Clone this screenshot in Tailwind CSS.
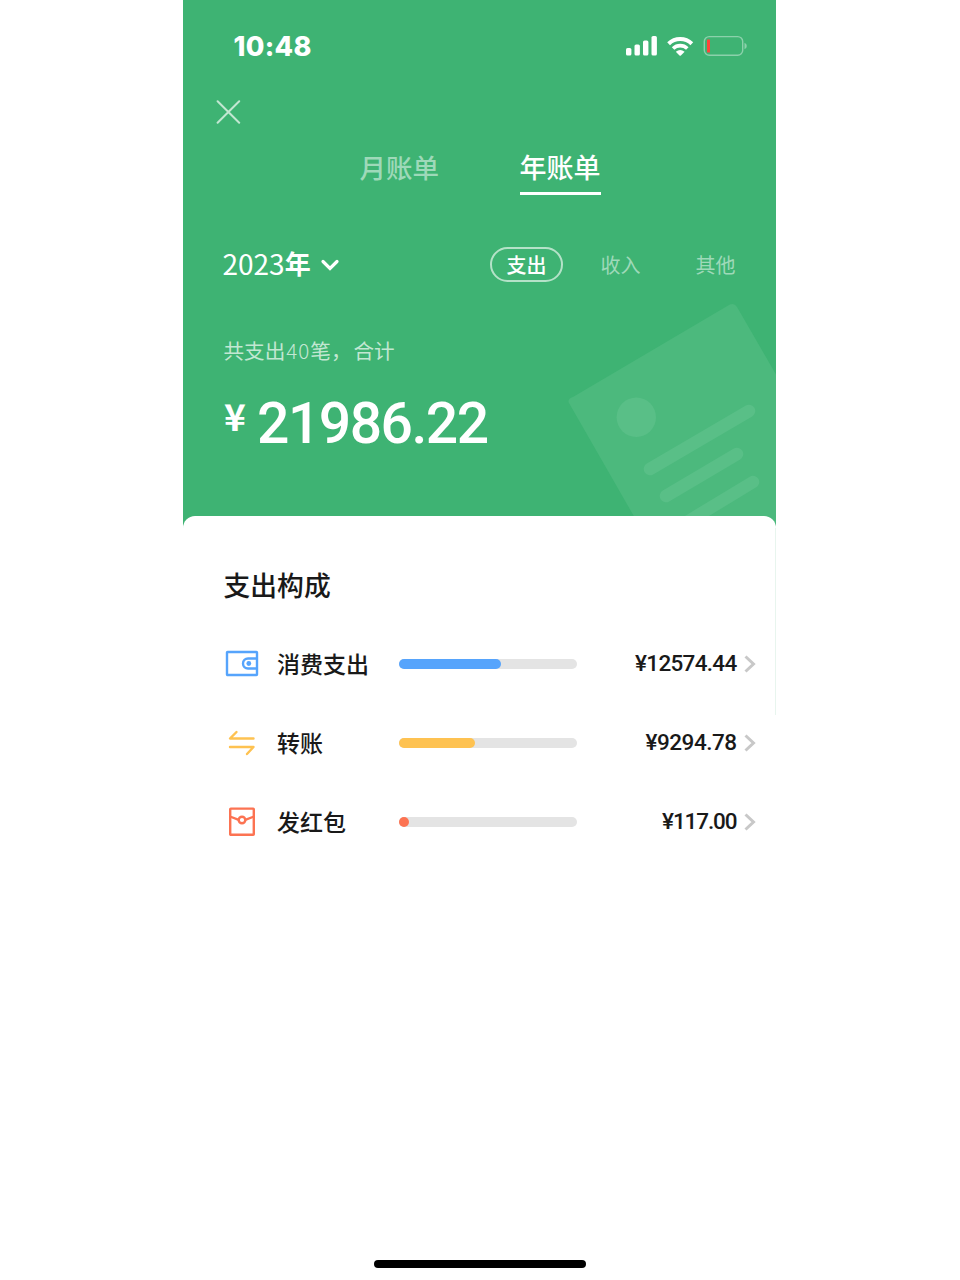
<!DOCTYPE html>
<html lang="zh-CN">
<head>
    <meta charset="UTF-8">
    <meta name="viewport" content="width=device-width, initial-scale=1.0">
    <title>年账单</title>
    <script src="https://cdn.jsdelivr.net/npm/@tailwindcss/browser@4"></script>
</head>
<body class="bg-white font-['Noto_Sans_CJK_SC',sans-serif]">
    <div class="relative ml-[183px] flex h-[1280px] w-[593px] flex-col overflow-hidden bg-white">
        <header class="relative h-[528px] shrink-0 overflow-hidden bg-[#3eb373] text-white">
            <svg class="absolute top-[290px] left-[367px]" width="226" height="238" viewBox="550 290 226 238" fill="none">
                <path d="M573 397 729 305Q734 302 737 307L800 416V614H690L569 403Q567 399 573 397Z" fill="#4cb97d"/>
                <circle cx="636.3" cy="417.3" r="19.7" fill="#59bf87"/>
                <path d="M650 469 749 411M666 496 737 454M682 525 753 482" stroke="#59bf87" stroke-width="12.5" stroke-linecap="round"/>
            </svg>

            <div class="flex h-[92px] items-center justify-between pr-[28px] pl-[50.5px]">
                <span id="clock" class="font-[Inter,sans-serif] text-[27px] leading-none font-extrabold tracking-[0.3px]">10:48</span>
                <svg width="123" height="24" viewBox="625 34 123 24" fill="none">
                    <g fill="#fff">
                        <rect x="626" y="48" width="5.4" height="7.5" rx="1.6"/>
                        <rect x="634.5" y="44.5" width="5.4" height="11" rx="1.6"/>
                        <rect x="643" y="40.5" width="5.4" height="15" rx="1.6"/>
                        <rect x="651.5" y="36" width="5.4" height="19.5" rx="1.6"/>
                    </g>
                    <path d="M668.6 43.8A16.6 16.6 0 0 1 691.8 43.8" stroke="#fff" stroke-width="4"/>
                    <path d="M673.1 48.5A10.2 10.2 0 0 1 687.3 48.5" stroke="#fff" stroke-width="3.6"/>
                    <path d="M675.8 51.8Q680.2 48.2 684.6 51.8L680.9 55.4Q680.2 56 679.5 55.4Z" fill="#fff"/>
                    <rect x="704.3" y="36.6" width="38.4" height="18.6" rx="5" stroke="#8bd1ab" stroke-width="1.4"/>
                    <rect x="707" y="39.5" width="3" height="13" rx=".5" fill="#ff453a"/>
                    <path d="M744.5 42.7Q746.8 43.5 746.8 45.9T744.5 49.2Z" fill="#8bd1ab"/>
                </svg>
            </div>

            <div class="flex h-10 items-center pl-[33px]">
                <svg width="25" height="24" viewBox="0 0 25 24" stroke="#c2e7d2" stroke-width="2" stroke-linecap="round">
                    <path d="M1.6 1.2 23.2 22.8M23.2 1.2 1.6 22.8"/>
                </svg>
            </div>

            <nav class="mt-[14px] flex h-[49px] gap-[80px] pl-[176.5px] text-[26.5px] leading-[41px] font-medium">
                <a class="w-[80px] text-[#9ed9b9]">月账单</a>
                <a class="w-[81.5px] border-b-3 border-white text-[27px]">年账单</a>
            </nav>

            <div class="mt-[52px] flex h-[35px] items-center">
                <div class="flex w-[307px] items-center pl-[39.5px]">
                    <span class="mb-[4px] text-[28px] leading-none">2023</span>
                    <span class="mb-[3px] text-[26px] leading-none font-bold">年</span>
                    <svg class="ml-[9px]" width="20" height="14" viewBox="0 0 20 14" fill="none" stroke="#fff" stroke-width="3.2" stroke-linecap="round">
                        <path d="M3 3.5 10 10.5 17 3.5"/>
                    </svg>
                </div>
                <div class="flex items-center text-[20px] leading-none">
                    <span class="flex h-[35px] w-[73px] items-center justify-center rounded-full border-2 border-[#b4e2c8] pt-px font-medium">支出</span>
                    <span class="ml-[37.5px] w-[40px] pt-px text-[#9ed9b9]">收入</span>
                    <span class="ml-[55px] w-[40px] pt-px text-[#9ed9b9]">其他</span>
                </div>
            </div>

            <p class="mt-[52px] pl-[40.5px] text-[20.6px] leading-[32px] whitespace-nowrap text-[#c2e7d2]">共支出<span class="ml-px font-light tracking-[1px]">40</span>笔，<span class="ml-[2px]">合计</span></p>

            <div class="mt-[25px] flex h-[60px] pl-[41px]">
                <span class="mt-[2px] w-[33px] text-[37px] leading-[44px] font-bold">¥</span>
                <span class="mt-[3px] font-[Roboto,sans-serif] text-[57px] leading-[60px] font-medium tracking-[-1.5px]">21986.22</span>
            </div>
        </header>

        <main class="relative -mt-[12.5px] flex-1 rounded-t-[12px] bg-white pt-[49px] pr-[19.5px] pl-[40.5px] text-[#191919]">
            <h2 class="text-[26.8px] leading-[40px] font-medium">支出构成</h2>

            <ul class="mt-[19.5px] text-[23px] font-medium">
                <li class="flex h-[79px] items-center">
                    <svg class="ml-[1.5px] shrink-0" width="34" height="28" viewBox="0 0 34 28" fill="none" stroke="#56a4fc" stroke-width="2.4">
                        <rect x="2" y="2" width="30" height="23" rx=".6"/>
                        <path d="M32 8.5H23A5 5 0 0 0 23 18.500H32"/>
                        <circle cx="23.8" cy="13.5" r="2.4" fill="#56a4fc" stroke="none"/>
                    </svg>
                    <span class="-mt-px ml-[18px] w-[122px] shrink-0">消费支出</span>
                    <div class="h-2.5 w-[178px] shrink-0 rounded-full bg-[#e4e4e4]">
                        <div class="h-2.5 rounded-full bg-[#56a4fc]" style="width: 57.2%"></div>
                    </div>
                    <span class="flex-1 pt-px text-right font-[Roboto,sans-serif] text-[22.5px] tracking-[-0.7px]">¥12574.44</span>
                    <svg class="ml-[6px] shrink-0" width="14" height="20" viewBox="0 0 14 20" fill="none" stroke="#c8c8c8" stroke-width="3"><path d="M2.5 2.5 10.5 10 2.5 17.5"/></svg>
                </li>
                <li class="flex h-[79px] items-center">
                    <svg class="ml-[1.5px] shrink-0" width="34" height="28" viewBox="0 0 34 28" fill="none" stroke="#fec251" stroke-width="2.4" stroke-linecap="round" stroke-linejoin="round">
                        <path d="M11.5 3 5 9.5H28.5M5 18H28.5L22 25"/>
                    </svg>
                    <span class="-mt-px ml-[18px] w-[122px] shrink-0">转账</span>
                    <div class="h-2.5 w-[178px] shrink-0 rounded-full bg-[#e4e4e4]">
                        <div class="h-2.5 rounded-full bg-[#fec251]" style="width: 42.5%"></div>
                    </div>
                    <span class="flex-1 pt-px text-right font-[Roboto,sans-serif] text-[22.5px] tracking-[-0.5px]">¥9294.78</span>
                    <svg class="ml-[6px] shrink-0" width="14" height="20" viewBox="0 0 14 20" fill="none" stroke="#c8c8c8" stroke-width="3"><path d="M2.5 2.5 10.5 10 2.5 17.5"/></svg>
                </li>
                <li class="flex h-[79px] items-center">
                    <svg class="ml-[1.5px] shrink-0" width="34" height="30" viewBox="0 0 34 30" fill="none" stroke="#fc7352" stroke-width="2.4">
                        <rect x="5.2" y="1.6" width="23.6" height="26.2" rx=".6"/>
                        <path d="M5 9.5 13.7 12.8M29 9.5 20.3 12.8"/>
                        <circle cx="17" cy="13" r="3.3"/>
                    </svg>
                    <span class="-mt-px ml-[18px] w-[122px] shrink-0">发红包</span>
                    <div class="h-2.5 w-[178px] shrink-0 rounded-full bg-[#e4e4e4]">
                        <div class="h-2.5 rounded-full bg-[#fc7352]" style="width: 5.6%"></div>
                    </div>
                    <span class="flex-1 pt-px text-right font-[Roboto,sans-serif] text-[22.5px] tracking-[-1.1px]">¥117.00</span>
                    <svg class="ml-[6px] shrink-0" width="14" height="20" viewBox="0 0 14 20" fill="none" stroke="#c8c8c8" stroke-width="3"><path d="M2.5 2.5 10.5 10 2.5 17.5"/></svg>
                </li>
            </ul>
            <div class="absolute top-[12px] right-0 h-[187px] w-px bg-[#e8f5ee]"></div>
        </main>

        <footer class="flex h-5 shrink-0 justify-center">
            <div class="h-2 w-[212px] rounded-full bg-black"></div>
        </footer>
    </div>
</body>
</html>
